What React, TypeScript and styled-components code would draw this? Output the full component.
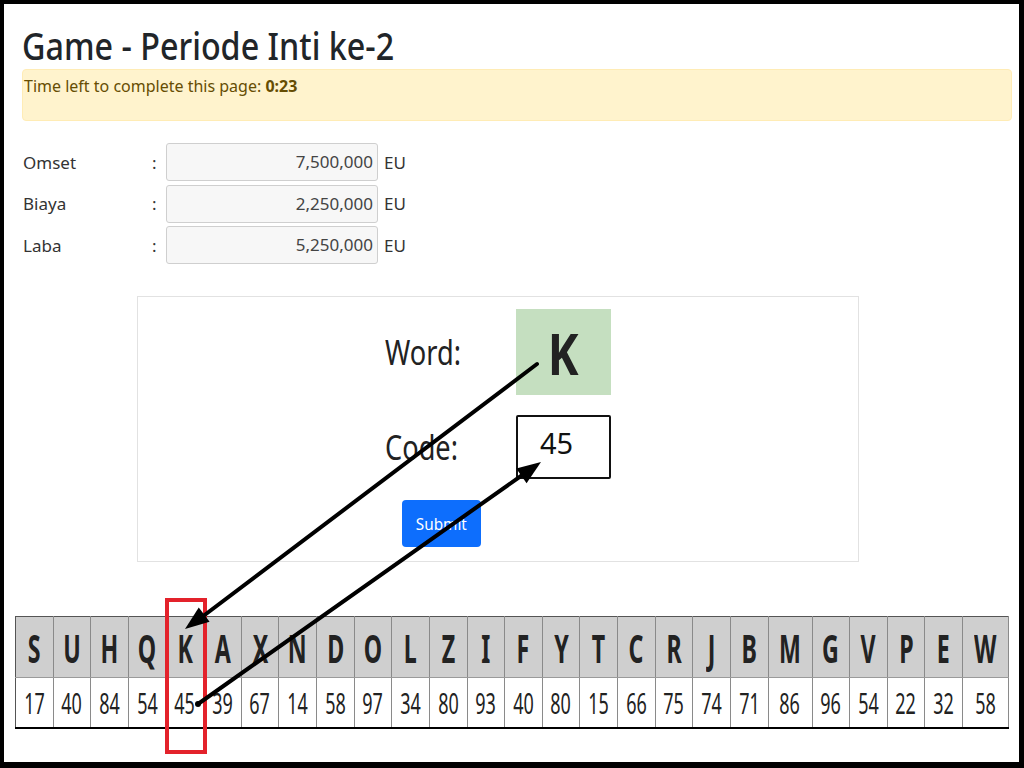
import React from "react";
import styled, { createGlobalStyle } from "styled-components";

const Global = createGlobalStyle`
  html, body { margin: 0; padding: 0; background: #fff; }
  body { font-family: "Noto Sans", "Open Sans", sans-serif; color: #212529; }
  * { box-sizing: border-box; }
`;

const Frame = styled.div`
  position: relative;
  width: 1024px;
  height: 768px;
  border-style: solid;
  border-color: #000;
  border-width: 4px 5px 6px 4px;
  overflow: hidden;
`;

const Container = styled.div`
  padding: 0 7px 0 18px;
`;

/* horizontally narrowed text, as the typeface in the picture is condensed */
const Narrow = styled.span<{ $sx: number; $origin?: string }>`
  display: inline-block;
  transform: scaleX(${(p) => p.$sx});
  transform-origin: ${(p) => p.$origin ?? "center"};
  white-space: nowrap;
`;

const Title = styled.h1`
  margin: 0;
  padding-top: 21px;
  height: 65px;
  font-size: 38px;
  font-weight: 500;
  line-height: 40px;
  color: #212529;
  white-space: nowrap;
`;

const Alert = styled.div`
  height: 52px;
  padding: 6px 0 0 1px;
  background: #fff3cd;
  border: 1px solid #ffecb5;
  border-radius: 4px;
  color: #664d03;
  font-size: 16px;
  line-height: 20px;
  b { font-weight: 700; }
`;

const Finance = styled.div`
  margin-top: 22px;
  display: grid;
  grid-template-columns: 128px 16px 212px auto;
  grid-auto-rows: 38px;
  row-gap: 3.5px;
  align-items: center;
  font-size: 17px;
  color: #333;
`;

const Label = styled.div`
  padding-left: 1px;
`;

const Colon = styled.div`
  padding-left: 2px;
`;

const ReadOnly = styled.div`
  height: 38px;
  background: #f7f7f7;
  border: 1px solid #cfcfcf;
  border-radius: 3px;
  text-align: right;
  padding: 0 4px;
  line-height: 36px;
  color: #444;
`;

const Unit = styled.div`
  padding-left: 6px;
`;

const Card = styled.div`
  margin: 32px 0 0 115px;
  width: 722px;
  height: 266px;
  border: 1px solid #e2e2e2;
  padding: 12px 0 0 247px;
  display: grid;
  grid-template-columns: 131px 95px;
  grid-template-rows: 86px 64px 48px;
  row-gap: 20px;
  align-items: center;
`;

const BigLabel = styled.div`
  font-size: 34px;
  color: #222;
  font-weight: 400;
`;

const WordBox = styled.div`
  height: 86px;
  background: #c5dfc0;
  display: flex;
  align-items: center;
  justify-content: center;
  font-size: 58px;
  font-weight: 700;
  color: #222;
`;

const CodeBox = styled.div`
  height: 64px;
  border: 2px solid #111;
  border-radius: 2px;
  padding: 8px 0 0 22px;
  font-size: 29px;
  line-height: 36px;
  color: #111;
`;

const ButtonCell = styled.div`
  align-self: end;
`;

const SubmitButton = styled.button`
  display: block;
  margin-left: 17px;
  width: 79px;
  height: 47px;
  border: none;
  border-radius: 4px;
  background: #0d6efd;
  color: #fff;
  font-family: "Noto Sans", sans-serif;
  font-size: 17px;
  padding: 0;
`;

const Table = styled.table`
  margin: 54px 0 0 -7px;
  width: 993px;
  table-layout: fixed;
  border-collapse: collapse;
  border-top: 1px solid #555;
  border-left: 1px solid #555;
  border-bottom: 2px solid #000;
`;

const HeadCell = styled.th<{ $w: number }>`
  width: ${(p) => p.$w}px;
  height: 61px;
  background: #cfcfcf;
  border-right: 1px solid #8a8a8a;
  border-bottom: 1px solid #9a9a9a;
  font-size: 40px;
  font-weight: 700;
  color: #222;
  text-align: center;
  padding: 0;
  overflow: hidden;
`;

const NumCell = styled.td`
  height: 50px;
  background: #fff;
  border-right: 1px solid #8a8a8a;
  font-size: 29px;
  font-weight: 400;
  color: #222;
  text-align: center;
  padding: 0;
  overflow: hidden;
`;

const Overlay = styled.svg`
  position: absolute;
  top: -4px;
  left: -4px;
  width: 1024px;
  height: 768px;
  pointer-events: none;
`;

const letters = "SUHQKAXNDOLZIFYTCRJBMGVPEW".split("");
const codes = [17, 40, 84, 54, 45, 39, 67, 14, 58, 97, 34, 80, 93, 40, 80, 15, 66, 75, 74, 71, 86, 96, 54, 22, 32, 58];
const wide: Record<string, number> = { M: 44, W: 46 };
const normalWidth = (993 - 90) / 24;

const finance = [
  ["Omset", "7,500,000"],
  ["Biaya", "2,250,000"],
  ["Laba", "5,250,000"],
];

function arrowHead(x1: number, y1: number, x2: number, y2: number, len = 24, half = 9) {
  const dx = x2 - x1;
  const dy = y2 - y1;
  const d = Math.hypot(dx, dy);
  const ux = dx / d;
  const uy = dy / d;
  const bx = x2 - ux * len;
  const by = y2 - uy * len;
  const px = -uy * half;
  const py = ux * half;
  return `${x2},${y2} ${bx + px},${by + py} ${bx - px},${by - py}`;
}

export default function App() {
  return (
    <>
      <Global />
      <Frame>
        <Container>
          <Title>
            <Narrow $sx={0.85} $origin="left">Game - Periode Inti ke-2</Narrow>
          </Title>
          <Alert>
            Time left to complete this page: <b>0:23</b>
          </Alert>
          <Finance>
            {finance.map(([l, v]) => (
              <React.Fragment key={l}>
                <Label>{l}</Label>
                <Colon>:</Colon>
                <ReadOnly>{v}</ReadOnly>
                <Unit>EU</Unit>
              </React.Fragment>
            ))}
          </Finance>
          <Card>
            <BigLabel>
              <Narrow $sx={0.8} $origin="left">Word:</Narrow>
            </BigLabel>
            <WordBox>
              <Narrow $sx={0.8}>K</Narrow>
            </WordBox>
            <BigLabel>
              <Narrow $sx={0.8} $origin="left">Code:</Narrow>
            </BigLabel>
            <CodeBox>45</CodeBox>
            <ButtonCell>
              <SubmitButton>
                <Narrow $sx={0.9}>Submit</Narrow>
              </SubmitButton>
            </ButtonCell>
          </Card>
          <Table>
            <thead>
              <tr>
                {letters.map((c, i) => (
                  <HeadCell key={i} $w={wide[c] ?? normalWidth}>
                    <Narrow $sx={0.58}>{c}</Narrow>
                  </HeadCell>
                ))}
              </tr>
            </thead>
            <tbody>
              <tr>
                {codes.map((n, i) => (
                  <NumCell key={i}>
                    <Narrow $sx={0.62}>{n}</Narrow>
                  </NumCell>
                ))}
              </tr>
            </tbody>
          </Table>
        </Container>
        <Overlay viewBox="0 0 1024 768">
          <rect x="167" y="600" width="38" height="152" fill="none" stroke="#e3222b" strokeWidth="4" />
          <line x1="537" y1="364" x2="198" y2="620" stroke="#000" strokeWidth="4" strokeLinecap="round" />
          <polygon points={arrowHead(537, 364, 185, 629)} fill="#000" />
          <line x1="198" y1="704" x2="528" y2="471" stroke="#000" strokeWidth="4" strokeLinecap="round" />
          <circle cx="198" cy="704" r="3" fill="#000" />
          <polygon points={arrowHead(198, 704, 541, 462)} fill="#000" />
        </Overlay>
      </Frame>
    </>
  );
}
